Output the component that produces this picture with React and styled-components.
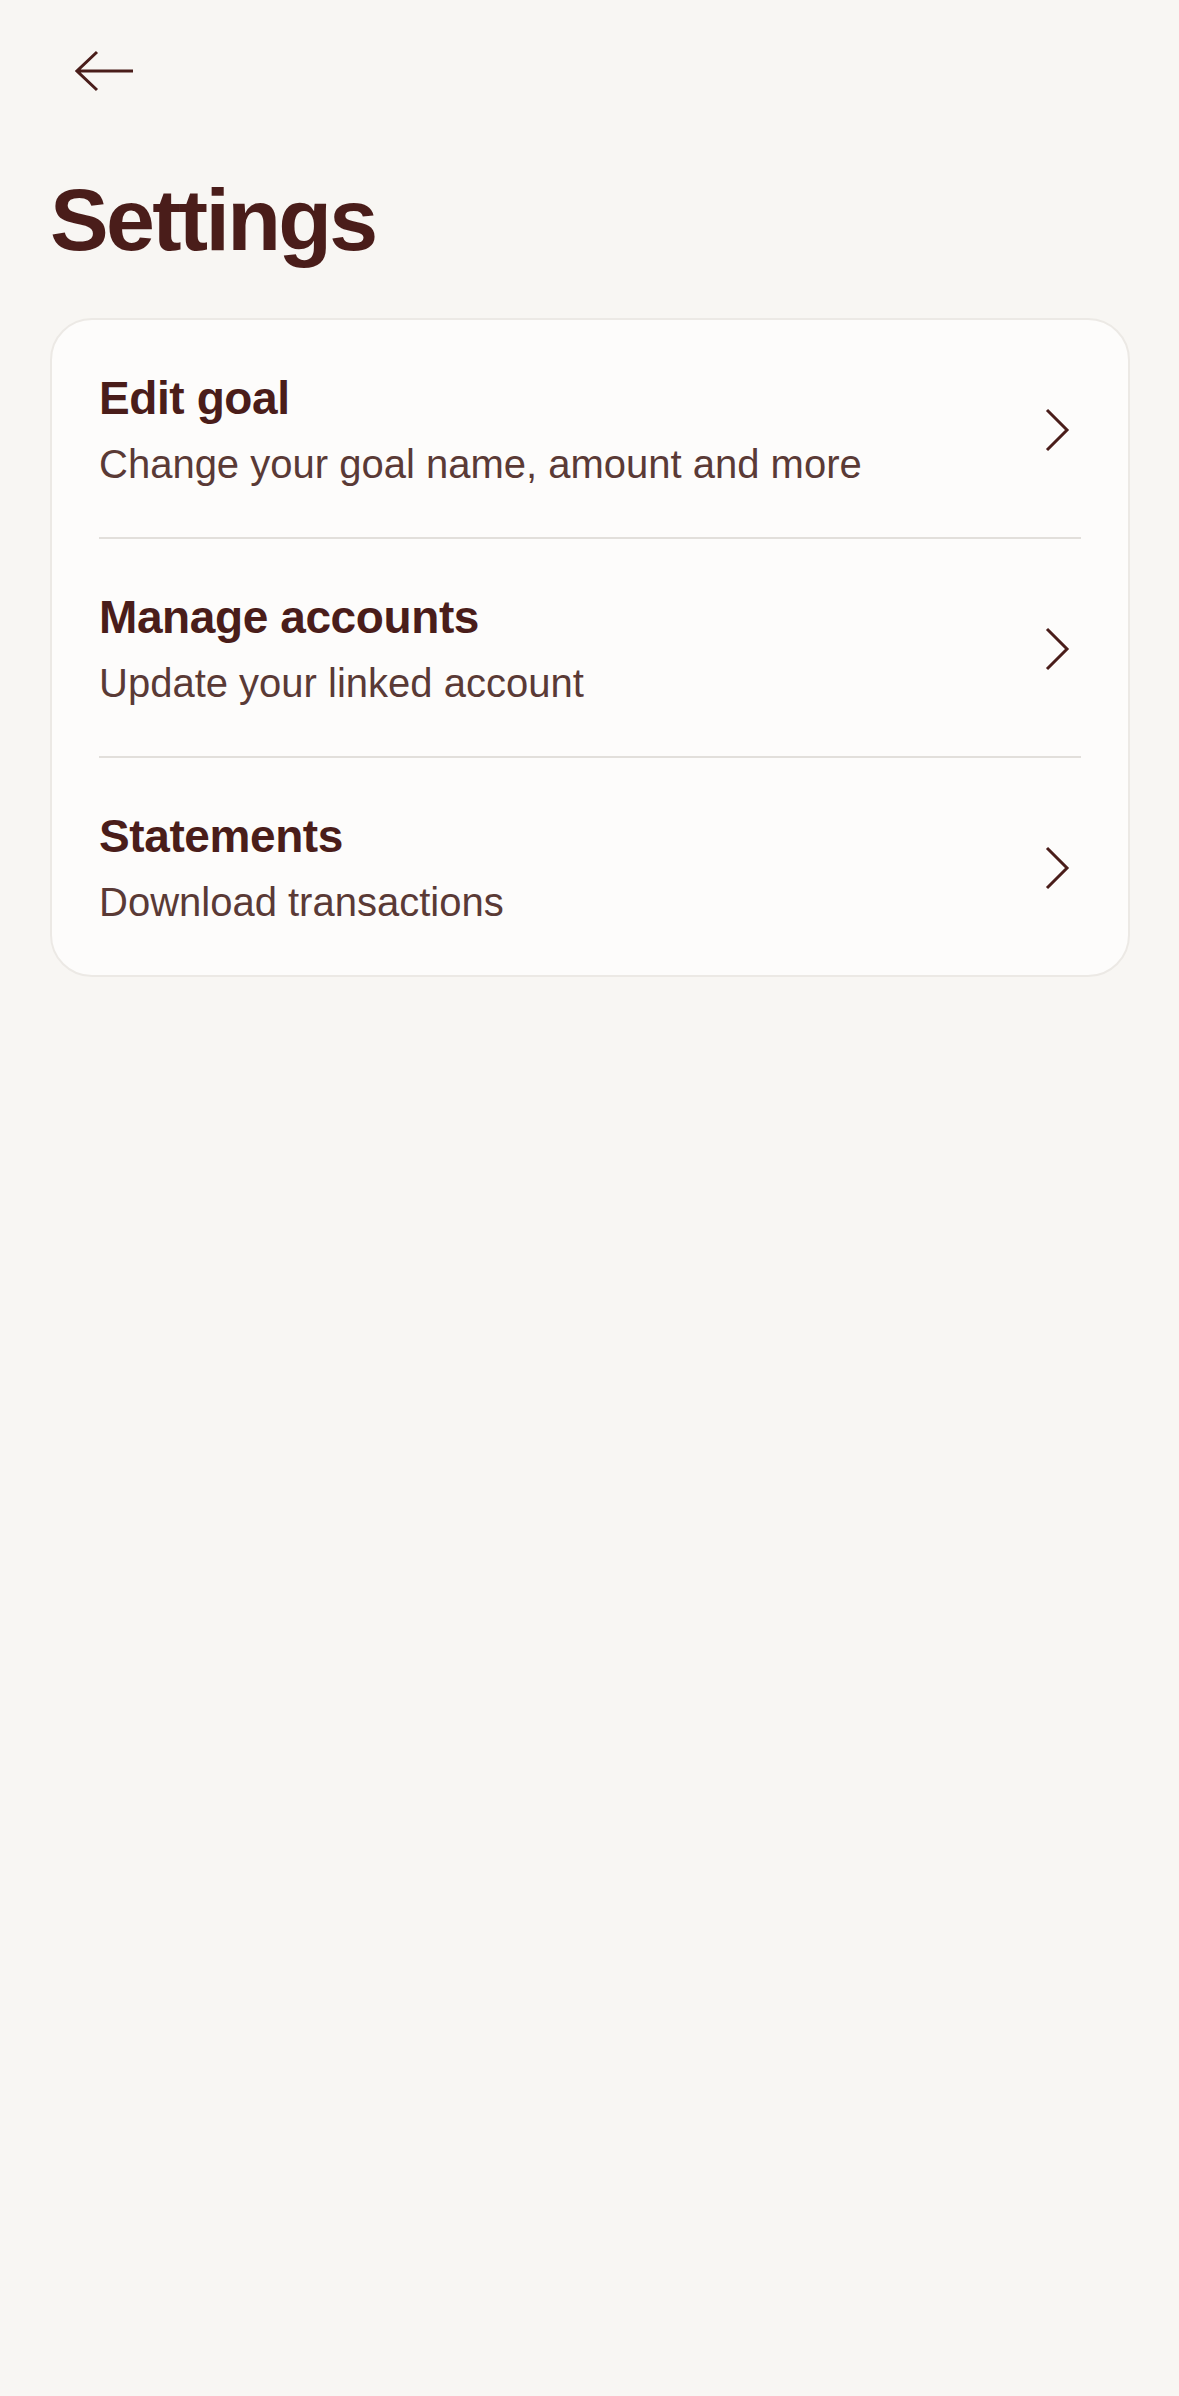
import React from "react";
import styled, { createGlobalStyle } from "styled-components";

const GlobalStyle = createGlobalStyle`
  html, body {
    margin: 0;
    padding: 0;
    background: #f8f6f3;
  }
  body {
    font-family: "Liberation Sans", Arial, sans-serif;
    color: #4a1d1a;
  }
`;

const items = [
  { title: "Edit goal", subtitle: "Change your goal name, amount and more" },
  { title: "Manage accounts", subtitle: "Update your linked account" },
  { title: "Statements", subtitle: "Download transactions" },
];

const BackIcon = () => (
  <svg width="60" height="42" viewBox="0 0 60 42" fill="none">
    <path
      d="M2 21 H58 M22 2 L2 21 L22 40"
      stroke="#4a1d1a"
      strokeWidth="3"
      strokeLinecap="butt"
      strokeLinejoin="miter"
    />
  </svg>
);

const ChevronIcon = () => (
  <svg width="26" height="44" viewBox="0 0 26 44" fill="none">
    <path
      d="M2 2 L22 22 L2 42"
      stroke="#4a1d1a"
      strokeWidth="3"
      strokeLinejoin="miter"
    />
  </svg>
);

const App = () => {
  return (
    <>
      <GlobalStyle />
      <Page>
        <TopBar>
          <BackButton aria-label="Back">
            <BackIcon />
          </BackButton>
        </TopBar>

        <Title>Settings</Title>

        <Card>
          {items.map((item, i) => (
            <Row key={item.title} $last={i === items.length - 1}>
              <RowText>
                <RowTitle>{item.title}</RowTitle>
                <RowSubtitle>{item.subtitle}</RowSubtitle>
              </RowText>
              <Chevron>
                <ChevronIcon />
              </Chevron>
            </Row>
          ))}
        </Card>
      </Page>
    </>
  );
};

export default App;

const Page = styled.main`
  min-height: 2396px;
  box-sizing: border-box;
  padding: 0 49px 0 50px;
  background: #f8f6f3;
`;

const TopBar = styled.div`
  height: 170px;
  display: flex;
  align-items: flex-start;
  padding-top: 50px;
  box-sizing: border-box;
`;

const BackButton = styled.button`
  display: flex;
  align-items: center;
  background: none;
  border: 0;
  padding: 0;
  margin-left: 25px;
  cursor: pointer;
`;

const Title = styled.h1`
  margin: 0;
  font-size: 88px;
  line-height: 100px;
  font-weight: 700;
  letter-spacing: -2.7px;
  color: #4a1d1a;
  height: 148px;
`;

const Card = styled.section`
  background: #fdfcfb;
  border: 2px solid #ece9e5;
  border-radius: 42px;
  padding: 0 47px;
  display: flex;
  flex-direction: column;
`;

const Row = styled.div`
  display: flex;
  align-items: center;
  justify-content: space-between;
  padding: 50px 0 47px;
  border-bottom: ${({ $last }) => ($last ? "none" : "2px solid #e2dfdb")};
`;

const RowText = styled.div`
  display: flex;
  flex-direction: column;
  gap: 12px;
`;

const RowTitle = styled.div`
  font-size: 46px;
  line-height: 56px;
  font-weight: 700;
  letter-spacing: -0.4px;
  color: #4a1d1a;
`;

const RowSubtitle = styled.div`
  font-size: 40px;
  line-height: 52px;
  color: #5a3a36;
`;

const Chevron = styled.div`
  display: flex;
  align-items: center;
  margin-right: 10px;
`;
